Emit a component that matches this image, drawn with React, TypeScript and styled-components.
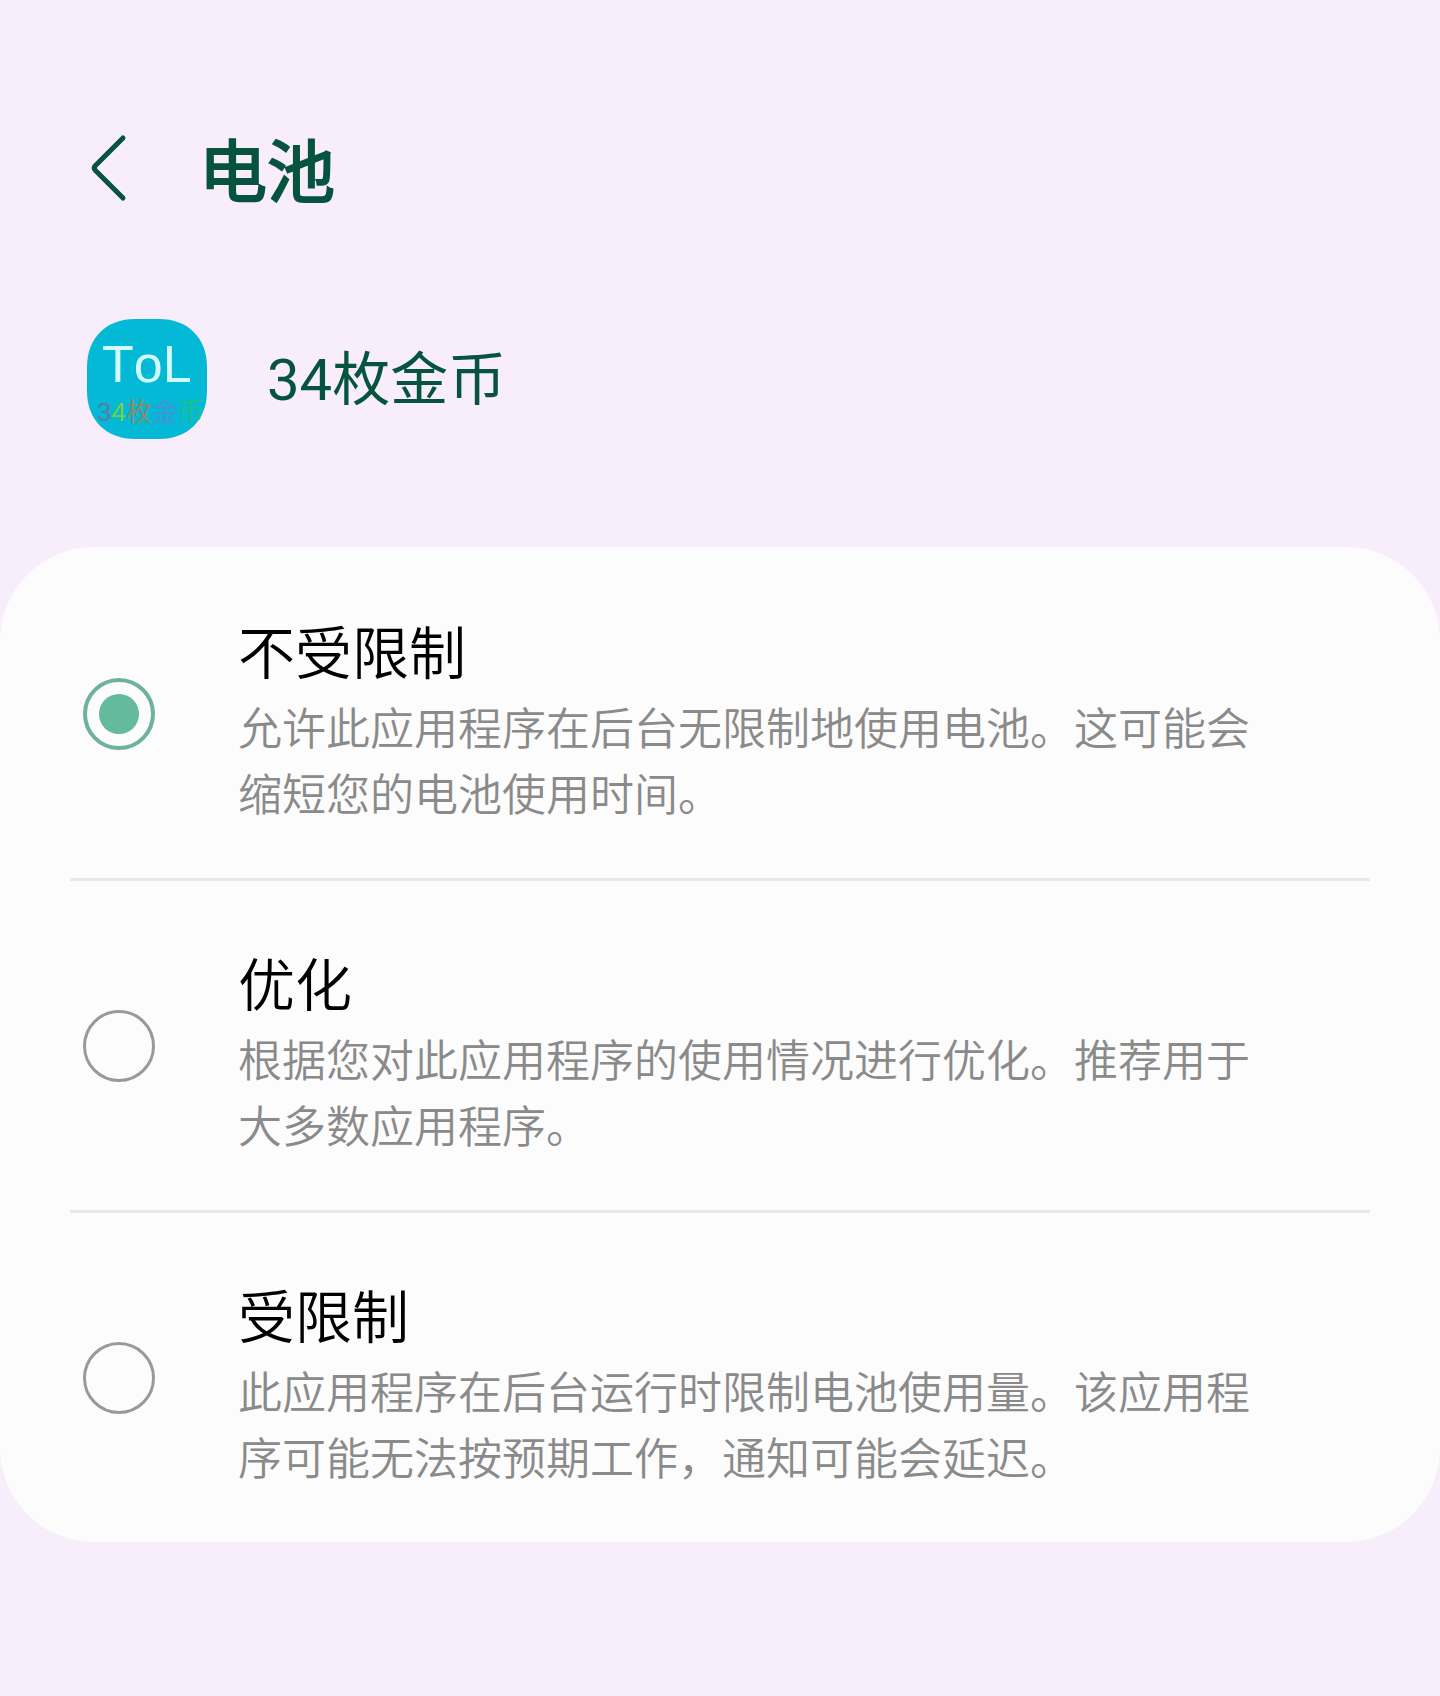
import React, { useState } from "react";
import styled, { createGlobalStyle } from "styled-components";

const GlobalStyle = createGlobalStyle`
  *, *::before, *::after { box-sizing: border-box; }
  body {
    margin: 0;
    background: #f8edfa;
    font-family: Roboto, "Noto Sans CJK SC", sans-serif;
  }
`;

const Page = styled.main`
  min-height: 100vh;
  padding: 112px 0 152px;
`;

const Header = styled.header`
  display: flex;
  align-items: center;
  height: 112px;
  padding: 0 79px;
  gap: 60px;
`;

const BackButton = styled.button`
  display: flex;
  align-items: center;
  justify-content: center;
  width: 60px;
  height: 80px;
  padding: 0;
  border: 0;
  background: none;
  color: #06533f;
  cursor: pointer;
`;

const Heading = styled.h1`
  margin: 0;
  padding-top: 12px;
  font-size: 68px;
  line-height: 96px;
  font-weight: 400;
  color: #06533f;
  -webkit-text-stroke: 2px #06533f;
`;

const AppRow = styled.section`
  display: flex;
  align-items: center;
  gap: 60px;
  margin: 95px 0 108px;
  padding: 0 87px;
`;

const AppName = styled.h2`
  margin: 0;
  padding-top: 2px;
  font-size: 58px;
  line-height: 84px;
  font-weight: 400;
  color: #06533f;
`;

const Card = styled.fieldset`
  min-width: 0;
  margin: 0;
  padding: 2px 70px 0;
  border: 0;
  border-radius: 94px;
  background: #fcfcfc;
`;

const Option = styled.label`
  display: flex;
  align-items: center;
  gap: 83px;
  padding: 49px 82px 49px 13px;
  cursor: pointer;

  & + & {
    border-top: 3px solid #e8e8e8;
  }
`;

const Radio = styled.input`
  flex: none;
  display: grid;
  place-items: center;
  width: 72px;
  height: 72px;
  margin: 0;
  appearance: none;
  border: 3px solid #999;
  border-radius: 50%;
  cursor: pointer;

  &:checked {
    border: 4px solid #6fb29b;
  }

  &:checked::before {
    content: "";
    width: 40px;
    height: 40px;
    border-radius: 50%;
    background: #63ba9d;
  }
`;

const OptionText = styled.span`
  flex: 1;
  min-width: 0;
  padding-top: 15px;
  font-weight: 350;
`;

const OptionTitle = styled.span`
  display: block;
  font-size: 57px;
  line-height: 84px;
  color: #000;
`;

const OptionDescription = styled.span`
  display: block;
  font-size: 44px;
  line-height: 66px;
  color: #8a8a8a;
`;

const LogoText = styled.text`
  font-family: "Liberation Sans", "Noto Sans CJK SC", sans-serif;
  font-kerning: none;
`;

const options = [
  {
    id: "unrestricted",
    title: "不受限制",
    description: "允许此应用程序在后台无限制地使用电池。这可能会缩短您的电池使用时间。",
  },
  {
    id: "optimized",
    title: "优化",
    description: "根据您对此应用程序的使用情况进行优化。推荐用于大多数应用程序。",
  },
  {
    id: "restricted",
    title: "受限制",
    description: "此应用程序在后台运行时限制电池使用量。该应用程序可能无法按预期工作，通知可能会延迟。",
  },
];

function BackIcon() {
  return (
    <svg width="40" height="72" viewBox="0 0 40 72" fill="none" aria-hidden="true">
      <path
        d="M34 6 L6.500 33.500 Q4 36 6.500 38.500 L34 66"
        stroke="currentColor"
        strokeWidth="5"
        strokeLinecap="round"
        strokeLinejoin="round"
      />
    </svg>
  );
}

function AppIcon() {
  return (
    <svg width="120" height="120" viewBox="0 0 120 120" aria-hidden="true">
      <path
        d="M48 0H72C101 0 120 19 120 48V72C120 101 101 120 72 120H48C19 120 0 101 0 72V48C0 19 19 0 48 0Z"
        fill="#04b9d5"
      />
      <LogoText x="15" y="63" fontSize="52" fill="#d2fbff">
        ToL
      </LogoText>
      <LogoText x="10" y="102" fontSize="26">
        <tspan fill="#557fa3">3</tspan>
        <tspan fill="#76d046">4</tspan>
        <tspan fill="#868a70">枚</tspan>
        <tspan fill="#4592d8">金</tspan>
        <tspan fill="#1cc08e">币</tspan>
      </LogoText>
    </svg>
  );
}

export default function App() {
  const [selected, setSelected] = useState("unrestricted");

  return (
    <>
      <GlobalStyle />
      <Page lang="zh-CN">
        <Header>
          <BackButton type="button" aria-label="返回">
            <BackIcon />
          </BackButton>
          <Heading>电池</Heading>
        </Header>
        <AppRow>
          <AppIcon />
          <AppName>34枚金币</AppName>
        </AppRow>
        <Card aria-label="电池">
          {options.map((option) => (
            <Option key={option.id} htmlFor={option.id}>
              <Radio
                type="radio"
                id={option.id}
                name="battery-usage"
                checked={selected === option.id}
                onChange={() => setSelected(option.id)}
              />
              <OptionText>
                <OptionTitle>{option.title}</OptionTitle>
                <OptionDescription>{option.description}</OptionDescription>
              </OptionText>
            </Option>
          ))}
        </Card>
      </Page>
    </>
  );
}
